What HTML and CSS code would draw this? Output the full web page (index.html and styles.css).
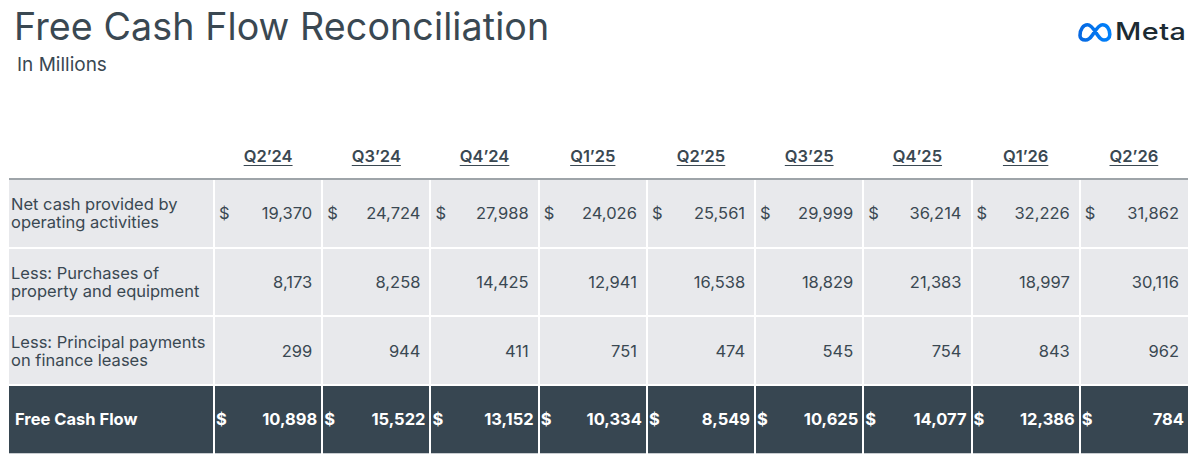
FILE: index.html
```html
<!DOCTYPE html>
<html lang="en">
<head>
<meta charset="utf-8">
<title>Free Cash Flow Reconciliation</title>
<link rel="stylesheet" href="styles.css">
</head>
<body>
<div class="page">
  <header class="top">
    <div class="titles">
      <h1 class="title">Free Cash Flow Reconciliation</h1>
      <div class="subtitle">In Millions</div>
    </div>
    <div class="logo">
      <svg class="logo-mark" viewBox="0 0 36 21" width="36" height="21" aria-hidden="true">
        <defs>
          <linearGradient id="mg" x1="0" y1="0" x2="1" y2="0">
            <stop offset="0" stop-color="#0668E1"/>
            <stop offset="1" stop-color="#0081FB"/>
          </linearGradient>
        </defs>
        <path d="M3 13.5 C3 7 6.5 2.8 10.5 2.8 C14.5 2.8 17.5 8.5 20.5 13 C22.5 16 24.5 18 27 18 C30 18 32.8 16 32.8 12.5 C32.8 6.5 29.5 2.8 25.5 2.8 C21.5 2.8 18.5 8.5 15.5 13 C13.5 16 11.5 18 8.5 18 C5 18 3 16.5 3 13.5 Z" fill="none" stroke="url(#mg)" stroke-width="3.6" stroke-linejoin="round"/>
      </svg>
      <span class="logo-text">Meta</span>
    </div>
  </header>

  <table class="fcf">
    <thead>
      <tr>
        <th class="lab"></th>
        <th><span>Q2’24</span></th>
        <th><span>Q3’24</span></th>
        <th><span>Q4’24</span></th>
        <th><span>Q1’25</span></th>
        <th><span>Q2’25</span></th>
        <th><span>Q3’25</span></th>
        <th><span>Q4’25</span></th>
        <th><span>Q1’26</span></th>
        <th><span>Q2’26</span></th>
      </tr>
    </thead>
    <tbody>
      <tr class="r1">
        <td class="lab">Net cash provided by<br>operating activities</td>
        <td><span class="cur">$</span>19,370</td>
        <td><span class="cur">$</span>24,724</td>
        <td><span class="cur">$</span>27,988</td>
        <td><span class="cur">$</span>24,026</td>
        <td><span class="cur">$</span>25,561</td>
        <td><span class="cur">$</span>29,999</td>
        <td><span class="cur">$</span>36,214</td>
        <td><span class="cur">$</span>32,226</td>
        <td><span class="cur">$</span>31,862</td>
      </tr>
      <tr>
        <td class="lab">Less: Purchases of<br>property and equipment</td>
        <td>8,173</td>
        <td>8,258</td>
        <td>14,425</td>
        <td>12,941</td>
        <td>16,538</td>
        <td>18,829</td>
        <td>21,383</td>
        <td>18,997</td>
        <td>30,116</td>
      </tr>
      <tr>
        <td class="lab">Less: Principal payments<br>on finance leases</td>
        <td>299</td>
        <td>944</td>
        <td>411</td>
        <td>751</td>
        <td>474</td>
        <td>545</td>
        <td>754</td>
        <td>843</td>
        <td>962</td>
      </tr>
      <tr class="total">
        <td class="lab">Free Cash Flow</td>
        <td><span class="cur">$</span>10,898</td>
        <td><span class="cur">$</span>15,522</td>
        <td><span class="cur">$</span>13,152</td>
        <td><span class="cur">$</span>10,334</td>
        <td><span class="cur">$</span>8,549</td>
        <td><span class="cur">$</span>10,625</td>
        <td><span class="cur">$</span>14,077</td>
        <td><span class="cur">$</span>12,386</td>
        <td><span class="cur">$</span>784</td>
      </tr>
    </tbody>
  </table>
</div>
</body>
</html>
```

FILE: styles.css
```css
html, body {
  margin: 0;
  padding: 0;
  background: #ffffff;
}

body {
  font-family: Inter, "Noto Sans", "Liberation Sans", sans-serif;
  color: #3a4852;
}

.page {
  width: 1200px;
  height: 473px;
  box-sizing: border-box;
  padding: 0 12px 0 9px;
  overflow: hidden;
}

.top {
  display: flex;
  justify-content: space-between;
  align-items: flex-start;
  height: 107px;
}

.titles {
  padding-left: 5px;
  padding-top: 4px;
}

.title {
  margin: 0;
  font-size: 37.6px;
  font-weight: 400;
  line-height: 46px;
  color: #3a4852;
  letter-spacing: 0.1px;
}

.subtitle {
  margin-top: 4px;
  padding-left: 3px;
  font-size: 19px;
  line-height: 22px;
  color: #3a4852;
}

.logo {
  display: flex;
  align-items: center;
  gap: 2px;
  padding-top: 20px;
  padding-right: 1px;
}

.logo-mark {
  display: block;
}

.logo-text {
  display: inline-block;
  font-size: 24px;
  line-height: 24px;
  font-weight: 500;
  color: #1c2b33;
  letter-spacing: 0.4px;
  transform: scaleX(1.2);
  transform-origin: left center;
  margin-right: 12px;
}

.fcf {
  width: 1179px;
  border-collapse: collapse;
  table-layout: fixed;
  font-size: 16.5px;
}

.fcf th {
  height: 59px;
  padding: 0 0 12px 0;
  vertical-align: bottom;
  text-align: center;
  font-weight: 600;
  font-size: 16.5px;
  color: #3a4852;
  border-bottom: 2px solid #9ea4a9;
}

.fcf th span {
  text-decoration: underline;
  text-underline-offset: 3px;
  text-decoration-thickness: 1px;
}

.fcf th.lab {
  width: 205px;
}

.fcf td {
  height: 66.7px;
  padding: 0 9px 0 4px;
  background: #e8e9ec;
  border-left: 2px solid #ffffff;
  border-top: 2px solid #ffffff;
  text-align: right;
  vertical-align: middle;
  white-space: nowrap;
  line-height: 18px;
}

.fcf tr.r1 td {
  border-top: 0;
}

.fcf td.lab {
  border-left: 0;
  text-align: left;
  padding: 0 0 0 2px;
  font-size: 16.5px;
  line-height: 18px;
}

.fcf td .cur {
  float: left;
}

.fcf tr.total td {
  background: #374651;
  color: #ffffff;
  font-weight: 700;
  padding-right: 4px;
  padding-left: 1px;
  border-bottom: 1px solid #c9cdd1;
}

.fcf tr.total td.lab {
  padding-left: 6px;
}
```
